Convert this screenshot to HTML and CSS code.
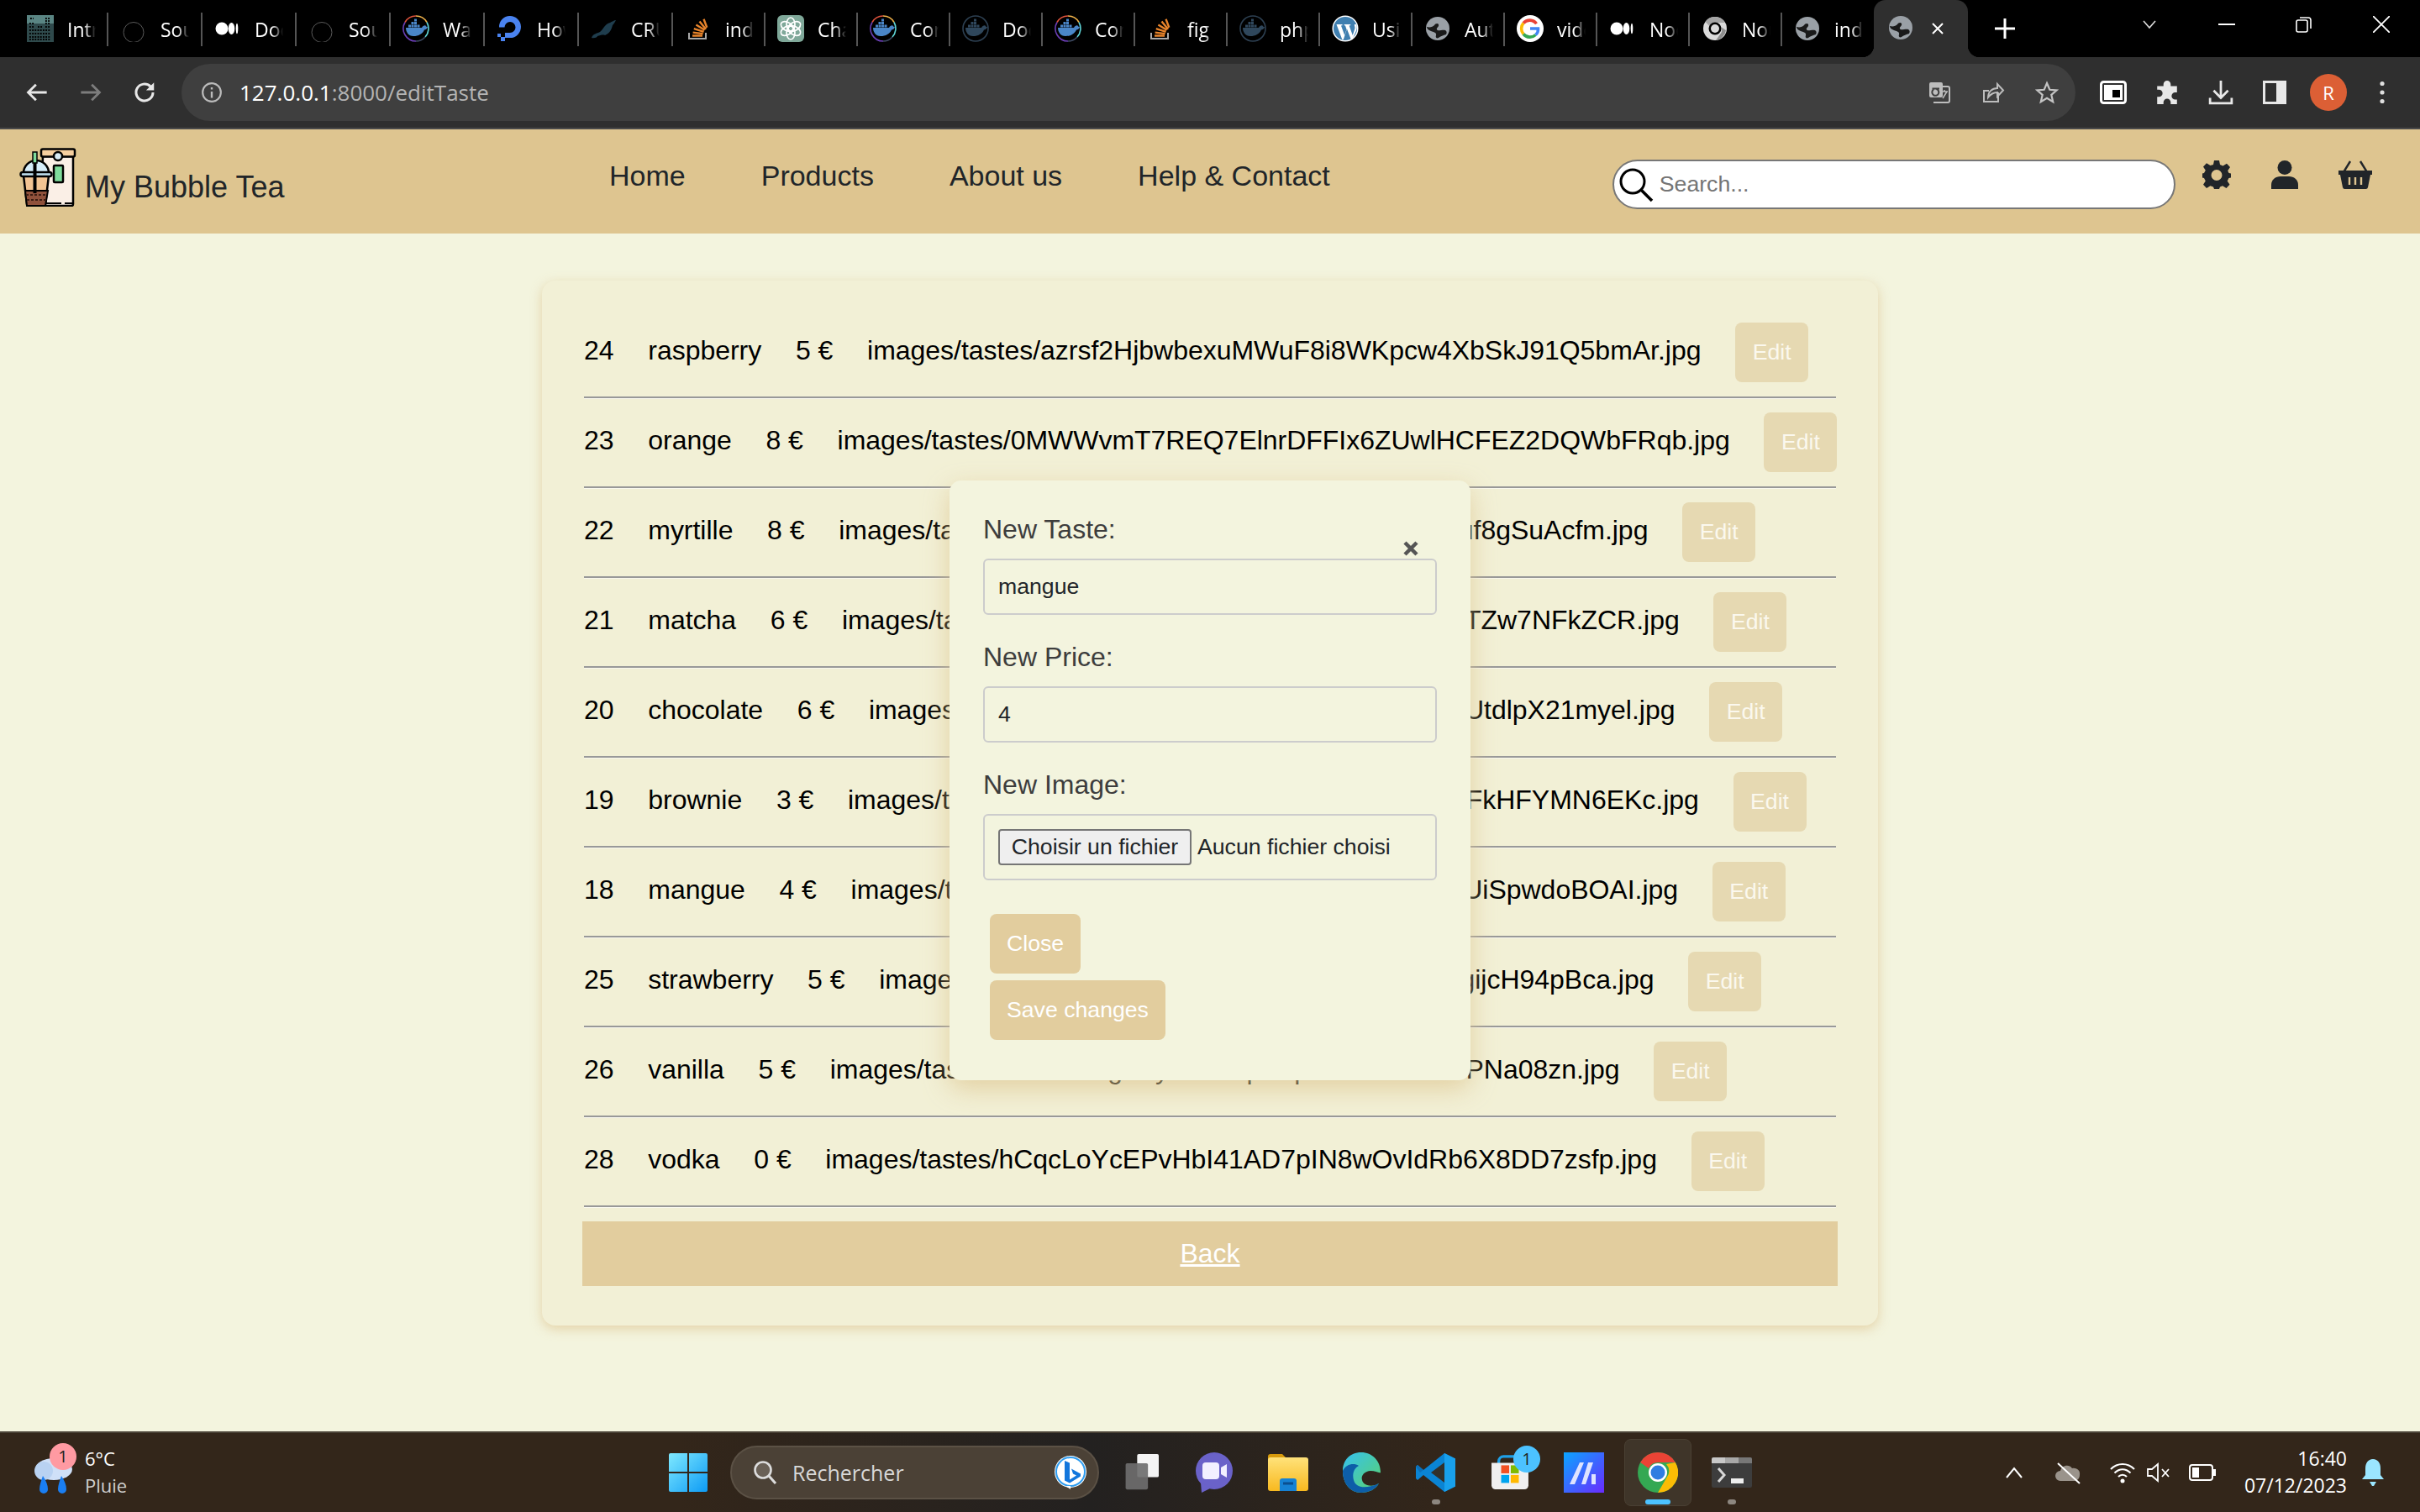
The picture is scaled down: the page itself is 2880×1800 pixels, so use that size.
FILE: index.html
```html
<!DOCTYPE html>
<html lang="en">
<head>
    <meta charset="UTF-8">
    <title>My Bubble Tea</title>
    <link rel="stylesheet" href="styles.css">
</head>
<body>

<!-- icons used more than once -->
<svg class="sprite" width="0" height="0">
    <defs>
        <linearGradient id="winBlue" x1="0" y1="0" x2="1" y2="1"><stop offset="0" stop-color="#7fe9ff"/><stop offset="1" stop-color="#0d9bf5"/></linearGradient>
        <linearGradient id="edgeG" x1="0" y1="0" x2="1" y2="1"><stop offset="0" stop-color="#35c1f1"/><stop offset="1" stop-color="#5bd36a"/></linearGradient>
        <linearGradient id="appBlue" x1="0" y1="0" x2="1" y2="1"><stop offset="0" stop-color="#0aa5ff"/><stop offset="1" stop-color="#6a2bff"/></linearGradient>
        <linearGradient id="folderG" x1="0" y1="0" x2="0" y2="1"><stop offset="0" stop-color="#ffe27a"/><stop offset="1" stop-color="#f8b91f"/></linearGradient>
    </defs>
    <symbol id="ring" viewBox="0 0 32 32"><circle cx="16" cy="20.500" r="12" fill="none" stroke="#5a5a5a" stroke-width="1"/></symbol>
    <symbol id="medium" viewBox="0 0 32 32"><circle cx="9" cy="16" r="7.500" fill="#fff"/><ellipse cx="20.500" cy="16" rx="3.800" ry="7" fill="#fff"/><ellipse cx="27" cy="16" rx="1.300" ry="6.300" fill="#fff"/></symbol>
    <symbol id="whale" viewBox="0 0 32 32"><path d="M4 15h19c1-2 3-3 4.500-2.500 .5 1 1.500 1.500 2.500 1.700-1 2.300-2.500 3-4 3.200C24 22 19 25 13 25 7 25 4 20 4 15z" fill="currentColor"/><path d="M7 11.500h3v3H7zM10.500 11.500h3v3h-3zM14 11.500h3v3h-3zM17.500 11.500h3v3h-3zM10.500 8h3v3h-3zM14 8h3v3h-3zM14 4.500h3v3h-3z" fill="currentColor"/></symbol>
    <symbol id="docker" viewBox="0 0 32 32">
        <path d="M16 1a15 15 0 0 0-13 7.500" fill="none" stroke="#e0533d" stroke-width="1.600"/>
        <path d="M16 1a15 15 0 0 1 13 7.500" fill="none" stroke="#f0b24a" stroke-width="1.600"/>
        <path d="M29 8.500A15 15 0 0 1 27 26" fill="none" stroke="#5fd4d6" stroke-width="1.600"/>
        <path d="M27 26a15 15 0 0 1-11 5" fill="none" stroke="#3e4a63" stroke-width="1.600"/>
        <path d="M16 31A15 15 0 0 1 3 8.500" fill="none" stroke="#6a3fb5" stroke-width="1.600"/>
        <use href="#whale" style="color:#4a86c8"/>
    </symbol>
    <symbol id="dockerDim" viewBox="0 0 32 32"><circle cx="16" cy="16" r="15" fill="none" stroke="#2d4052" stroke-width="1.600"/><use href="#whale" style="color:#2f475c"/></symbol>
    <symbol id="stack" viewBox="0 0 32 32"><path d="M5 21v7h20v-7" fill="none" stroke="#a9a9a9" stroke-width="2"/><path d="M9 24.500h12M9.600 20.600l12 1.500M10.800 16.200l11.800 3.600M13.400 11.500l10.200 6.300M17.500 7.400l7.600 9.400M22.500 4.800l3.800 10" stroke="#e8842b" stroke-width="2.400" fill="none"/></symbol>
    <symbol id="globe" viewBox="0 0 32 32"><circle cx="16" cy="16" r="14" fill="#9aa0a6"/><path d="M3 14c4 1 7 0 9-2 1-2 4-3 5-1 1 3-3 4-2 6 1 3 6 0 10 1 2 1 2 3 1 5-3 1-7 2-9 4-2 1-4 0-3-3 1-3-3-4-6-5-3-1-5-3-5-5z" fill="#1a1a1a"/></symbol>
    <symbol id="chromeGrey" viewBox="0 0 32 32"><circle cx="16" cy="16" r="14" fill="#dadada"/><path d="M16 2a14 14 0 0 1 12.100 7H16a7 7 0 0 0-6.500 4L4.500 8A14 14 0 0 1 16 2z" fill="#a4a4a4"/><path d="M23 14l6 4a14 14 0 0 1-12 12l5-7a7 7 0 0 0 1-9z" fill="#8e8e8e"/><circle cx="16" cy="16" r="7.500" fill="#000"/><circle cx="16" cy="16" r="5" fill="#dadada"/></symbol>
</svg>

<!-- browser tab strip -->
<div class="tabstrip">
    <div class="tab">
        <svg class="tab-icon" viewBox="0 0 32 32"><rect width="32" height="32" fill="#2f4a4c"/><rect width="32" height="10" fill="#5a8583"/><path d="M3 10h5M22 4h5M22 10h5M3 14h5M13 14h5M22 14h5M3 18h25M3 22h25M3 26h25M3 29h25" stroke="#000" stroke-width="1.800" stroke-dasharray="1.800 1.400"/><path d="M4 4h4M22 7h5" stroke="#000" stroke-width="2" stroke-dasharray="1.800 1.400"/></svg>
        <span class="tab-title">Intro</span>
    </div>
    <div class="tab wide"><svg class="tab-icon"><use href="#ring"/></svg><span class="tab-title">Source</span></div>
    <div class="tab wide"><svg class="tab-icon"><use href="#medium"/></svg><span class="tab-title">Docker</span></div>
    <div class="tab wide"><svg class="tab-icon"><use href="#ring"/></svg><span class="tab-title">Source</span></div>
    <div class="tab wide"><svg class="tab-icon"><use href="#docker"/></svg><span class="tab-title">Wait</span></div>
    <div class="tab wide">
        <svg class="tab-icon" viewBox="0 0 32 32"><path d="M16 27v-6a6.500 6.500 0 1 0-6.500-6.500H3A13 13 0 1 1 16 27z" fill="#4a83f0"/><path d="M10 21h6v6h-6zM5 26h5v5H5zM1 22h4v4H1z" fill="#4a83f0"/></svg>
        <span class="tab-title">How</span>
    </div>
    <div class="tab wide">
        <svg class="tab-icon" viewBox="0 0 32 32"><path d="M1 27c2-5 6-5 10-7 4-3 6-10 12-11 2-1 5-3 7-3-1 2-3 5-4 6-1 5-4 10-9 12-2-1-6 0-9 1 0 1-3 3-7 2z" fill="#1f3d4d"/></svg>
        <span class="tab-title">CRUD</span>
    </div>
    <div class="tab"><svg class="tab-icon"><use href="#stack"/></svg><span class="tab-title">index</span></div>
    <div class="tab">
        <svg class="tab-icon" viewBox="0 0 32 32"><rect width="32" height="32" rx="6" fill="#7fa899"/><g fill="none" stroke="#fff" stroke-width="1.700"><ellipse cx="16" cy="11" rx="5" ry="8"/><ellipse cx="16" cy="11" rx="5" ry="8" transform="rotate(60 16 16)"/><ellipse cx="16" cy="11" rx="5" ry="8" transform="rotate(120 16 16)"/><ellipse cx="16" cy="11" rx="5" ry="8" transform="rotate(180 16 16)"/><ellipse cx="16" cy="11" rx="5" ry="8" transform="rotate(240 16 16)"/><ellipse cx="16" cy="11" rx="5" ry="8" transform="rotate(300 16 16)"/></g></svg>
        <span class="tab-title">ChatGPT</span>
    </div>
    <div class="tab"><svg class="tab-icon"><use href="#docker"/></svg><span class="tab-title">Container</span></div>
    <div class="tab"><svg class="tab-icon"><use href="#dockerDim"/></svg><span class="tab-title">Docker</span></div>
    <div class="tab"><svg class="tab-icon"><use href="#docker"/></svg><span class="tab-title">Container</span></div>
    <div class="tab"><svg class="tab-icon"><use href="#stack"/></svg><span class="tab-title">fig</span></div>
    <div class="tab"><svg class="tab-icon"><use href="#dockerDim"/></svg><span class="tab-title">php</span></div>
    <div class="tab">
        <svg class="tab-icon" viewBox="0 0 32 32"><circle cx="16" cy="16" r="15.500" fill="#fff"/><circle cx="16" cy="16" r="14" fill="#3f7fb0"/><path d="M5.500 11h7v1.200l-1.500.2 4.200 11.600 2.300-7-1.500-4.600-1.300-.2V11h7.500v1.200l-1.600.2 4.200 11.600 2.600-8c.5-2-.8-3.200-.5-5h2.300c1 3 .5 5.500-.3 7.800L24.300 29h-1.500l-4.800-12.500L13.800 29h-1.500z" fill="#fff"/></svg>
        <span class="tab-title">Using</span>
    </div>
    <div class="tab"><svg class="tab-icon"><use href="#globe"/></svg><span class="tab-title">Auth</span></div>
    <div class="tab">
        <svg class="tab-icon" viewBox="0 0 32 32"><circle cx="16" cy="16" r="16" fill="#fff"/><path d="M23.500 10.200A10 10 0 0 0 8 9.500" fill="none" stroke="#ea4335" stroke-width="3.600"/><path d="M8 9.500a10 10 0 0 0 0 13" fill="none" stroke="#fbbc05" stroke-width="3.600"/><path d="M8 22.500a10 10 0 0 0 14.500 1" fill="none" stroke="#34a853" stroke-width="3.600"/><path d="M22.500 23.500A9 9 0 0 0 25.500 16H16" fill="none" stroke="#4285f4" stroke-width="3.600"/></svg>
        <span class="tab-title">video</span>
    </div>
    <div class="tab"><svg class="tab-icon"><use href="#medium"/></svg><span class="tab-title">Node</span></div>
    <div class="tab"><svg class="tab-icon"><use href="#chromeGrey"/></svg><span class="tab-title">Nouvel</span></div>
    <div class="tab last"><svg class="tab-icon"><use href="#globe"/></svg><span class="tab-title">index</span></div>
    <div class="tab-active">
        <svg class="tab-icon"><use href="#globe"/></svg>
        <svg class="tab-close" viewBox="0 0 16 16"><path d="M2 2l12 12M14 2L2 14" stroke="#fff" stroke-width="2"/></svg>
    </div>
    <svg class="new-tab" viewBox="0 0 24 24"><path d="M12 0v24M0 12h24" stroke="#fff" stroke-width="3"/></svg>
    <div class="window-btns">
        <div class="window-btn"><svg viewBox="0 0 16 16" width="16" height="16"><path d="M1 4l7 8 7-8" fill="none" stroke="#ddd" stroke-width="1.600"/></svg></div>
        <div class="window-btn"><svg viewBox="0 0 20 20" width="20" height="20"><path d="M0 10h20" stroke="#fff" stroke-width="2"/></svg></div>
        <div class="window-btn"><svg viewBox="0 0 20 20" width="20" height="20"><rect x="1" y="5" width="13" height="14" rx="2" fill="none" stroke="#fff" stroke-width="1.600"/><path d="M5 2h10a3 3 0 0 1 3 3v10" fill="none" stroke="#fff" stroke-width="1.600"/></svg></div>
        <div class="window-btn"><svg viewBox="0 0 20 20" width="20" height="20"><path d="M0 0l20 20M20 0L0 20" stroke="#fff" stroke-width="1.800"/></svg></div>
    </div>
</div>

<!-- browser toolbar -->
<div class="toolbar">
    <div class="tool-btn"><svg viewBox="0 0 24 24" width="28" height="28"><path d="M22 12H3M11 4l-8 8 8 8" fill="none" stroke="#e8e8e8" stroke-width="2.400"/></svg></div>
    <div class="tool-btn"><svg viewBox="0 0 24 24" width="28" height="28"><path d="M2 12h19M13 4l8 8-8 8" fill="none" stroke="#7d7d7d" stroke-width="2.400"/></svg></div>
    <div class="tool-btn"><svg viewBox="0 0 24 24" width="30" height="30"><path d="M20 12a8 8 0 1 1-2.400-5.700L20 8.700" fill="none" stroke="#e8e8e8" stroke-width="2.400"/><path d="M21 2.500v7.500h-7.500z" fill="#e8e8e8"/></svg></div>
    <div class="omnibox">
        <svg class="omni-info" viewBox="0 0 24 24" width="26" height="26"><circle cx="12" cy="12" r="10" fill="none" stroke="#bbb" stroke-width="2"/><path d="M12 11v7M12 6.500v2.200" stroke="#bbb" stroke-width="2.200"/></svg>
        <div class="url"><span class="url-host">127.0.0.1</span>:8000/editTaste</div>
        <div class="omni-actions">
            <div class="tool-btn"><svg viewBox="0 0 28 28" width="28" height="28"><rect x="2" y="2" width="16" height="18" rx="2" fill="#bdbdbd"/><path d="M7 26h17a2 2 0 0 0 2-2V9a2 2 0 0 0-2-2h-6" fill="none" stroke="#bdbdbd" stroke-width="2"/><path d="M14 9.500H6.500V11a4 4 0 1 0 4-1" fill="none" stroke="#3f3f3f" stroke-width="2"/><path d="M17 13h7M20 11v2M18 21l5-8" stroke="#bdbdbd" stroke-width="1.500" fill="none"/></svg></div>
            <div class="tool-btn"><svg viewBox="0 0 28 28" width="28" height="28"><path d="M20 14v11H3V12h6" fill="none" stroke="#bdbdbd" stroke-width="2"/><path d="M8 20c0-7 5-11 11-11V4l7 7.500-7 7.500v-5c-5 0-8 2-11 6z" fill="none" stroke="#bdbdbd" stroke-width="2"/></svg></div>
            <div class="tool-btn"><svg viewBox="0 0 28 28" width="28" height="28"><path d="M14 3l3.300 7.800 8.200.7-6.200 5.500 1.900 8.200L14 20.800 6.800 25.200l1.900-8.200-6.200-5.500 8.200-.7z" fill="none" stroke="#c4c4c4" stroke-width="2.200"/></svg></div>
        </div>
    </div>
    <div class="toolbar-actions">
        <div class="tool-btn"><svg viewBox="0 0 32 28" width="32" height="28"><rect x="1.500" y="1.500" width="29" height="25" rx="3" fill="none" stroke="#fff" stroke-width="3"/><rect x="5" y="5" width="22" height="18" fill="#fff"/><rect x="15" y="11" width="9" height="9" fill="#000"/></svg></div>
        <div class="tool-btn"><svg viewBox="0 0 28 28" width="30" height="30"><path d="M10 5a4 4 0 0 1 8 0v2h7v7h-2a4 4 0 0 0 0 8h2v5H18v-2a4 4 0 0 0-8 0v2H3v-8h2a4 4 0 0 0 0-8H3V7h7z" fill="#e8e8e8"/></svg></div>
        <div class="tool-btn"><svg viewBox="0 0 28 28" width="30" height="32"><path d="M14 1v18M6 12l8 8 8-8" fill="none" stroke="#e8e8e8" stroke-width="2.600"/><path d="M2 20v6h24v-6" fill="none" stroke="#e8e8e8" stroke-width="2.600"/></svg></div>
        <div class="tool-btn"><svg viewBox="0 0 28 28" width="28" height="28"><rect x="1.500" y="1.500" width="25" height="25" fill="none" stroke="#e8e8e8" stroke-width="3"/><rect x="16" y="2" width="10" height="24" fill="#e8e8e8"/></svg></div>
        <div class="tool-btn"><div class="avatar">R</div></div>
        <div class="tool-btn"><svg viewBox="0 0 6 28" width="6" height="28"><circle cx="3" cy="3.500" r="2.600" fill="#e0e0e0"/><circle cx="3" cy="14" r="2.600" fill="#e0e0e0"/><circle cx="3" cy="24.500" r="2.600" fill="#e0e0e0"/></svg></div>
    </div>
</div>

<!-- site header -->
<header class="site-header">
    <div class="brand">
        <svg class="brand-logo" viewBox="0 0 68 70">
            <path d="M28 10h36v57a2 2 0 0 1-2 2H26z" fill="#faefe6" stroke="#000" stroke-width="2.500"/>
            <path d="M28 66h36" stroke="#000" stroke-width="2" stroke-dasharray="22 4 9 9" fill="none"/>
            <rect x="26" y="1.500" width="40" height="9" rx="2" fill="#f6cf9f" stroke="#000" stroke-width="2.500"/>
            <circle cx="46" cy="10" r="5" fill="#d8ecf6" stroke="#000" stroke-width="2.500"/>
            <rect x="41" y="21" width="11" height="20" rx="1" fill="#7fdc9c" stroke="#000" stroke-width="2.500"/>
            <path d="M5 33l4 34a2 2 0 0 0 2 2h18a2 2 0 0 0 2-2l4-34z" fill="#f2c493" stroke="#000" stroke-width="2.500"/>
            <path d="M7 51h27l-3 18H9z" fill="#8f513b" stroke="#000" stroke-width="2"/>
            <path d="M8 56h25M9 62h23" stroke="#3d1e14" stroke-width="2" stroke-dasharray="3 2"/>
            <path d="M5 30a15 15 0 0 1 30 0z" fill="#d6eefa" stroke="#000" stroke-width="2.500"/>
            <rect x="1.500" y="29" width="37" height="5" rx="2.500" fill="#c3e3f3" stroke="#000" stroke-width="2.500"/>
            <rect x="16" y="5" width="5" height="13" fill="#7fdc9c" stroke="#000" stroke-width="1.500"/>
            <path d="M18.500 18v36" stroke="#000" stroke-width="4"/>
        </svg>
        <span class="brand-name">My Bubble Tea</span>
    </div>
    <nav class="site-nav">
        <a href="#">Home</a>
        <a href="#">Products</a>
        <a href="#">About us</a>
        <a href="#">Help &amp; Contact</a>
    </nav>
    <div class="search-box">
        <svg viewBox="0 0 42 42" width="42" height="42"><circle cx="17" cy="17" r="14" fill="none" stroke="#000" stroke-width="3"/><path d="M27 27l13 13" stroke="#000" stroke-width="3.500"/></svg>
        <input type="text" placeholder="Search...">
    </div>
    <div class="header-icons">
        <svg class="icon-gear" viewBox="0 0 34 34" width="34" height="34"><path fill-rule="evenodd" d="M14 0h6l1 5 3.500 1.500 4.500-2.800 4 4.300-2.800 4.300L31.500 15l2.500.5v5l-2.500.5-1.800 3.500 2.800 4.300-4 4.300-4.500-2.800L21 31.500 20 34h-6l-1-2.500-3.500-1.300L5 33l-4-4.300 2.800-4.300L2 21l-2-.5v-5l2-.5 1.800-3.200L1 7.500l4-4.300 4.500 2.800L13 5zM17 11a6.500 6.500 0 1 0 0 13 6.500 6.500 0 0 0 0-13z" fill="#212529"/></svg>
        <svg class="icon-user" viewBox="0 0 32 34" width="32" height="34"><circle cx="16" cy="8.500" r="8.500" fill="#212529"/><path d="M0 34v-5c0-6 5-10 11-10h10c6 0 11 4 11 10v5z" fill="#212529"/></svg>
        <svg class="icon-basket" viewBox="0 0 40 34" width="40" height="34"><path d="M6 14L14 1M34 14L26 1" stroke="#212529" stroke-width="2.400"/><path d="M0 12h40v5h-2l-3 15a2.500 2.500 0 0 1-2.500 2h-25A2.500 2.500 0 0 1 5 32L2 17H0z" fill="#212529"/><path d="M13 20v9M20 20v9M27 20v9" stroke="#dec590" stroke-width="2.400"/></svg>
    </div>
</header>

<!-- taste list -->
<main class="card">
    <div class="taste-row"><span>24</span><span>raspberry</span><span>5 €</span><span>images/tastes/azrsf2HjbwbexuMWuF8i8WKpcw4XbSkJ91Q5bmAr.jpg</span><button class="btn-edit">Edit</button></div>
    <div class="taste-row"><span>23</span><span>orange</span><span>8 €</span><span>images/tastes/0MWWvmT7REQ7ElnrDFFIx6ZUwlHCFEZ2DQWbFRqb.jpg</span><button class="btn-edit">Edit</button></div>
    <div class="taste-row"><span>22</span><span>myrtille</span><span>8 €</span><span>images/tastes/h4nd0a7eub3k2od9ba6ne1uh8dob5auf8gSuAcfm.jpg</span><button class="btn-edit">Edit</button></div>
    <div class="taste-row"><span>21</span><span>matcha</span><span>6 €</span><span>images/tastes/a7nEb2ud5oh8ke1dn4bu0ha6eo3nd9TZw7NFkZCR.jpg</span><button class="btn-edit">Edit</button></div>
    <div class="taste-row"><span>20</span><span>chocolate</span><span>6 €</span><span>images/tastes/E0nb6aEu2hk7od3ne9ba1du5oh4nUtdlpX21myel.jpg</span><button class="btn-edit">Edit</button></div>
    <div class="taste-row"><span>19</span><span>brownie</span><span>3 €</span><span>images/tastes/R5duE3nbR7ao1he8nu2db4oa6hn9eFkHFYMN6EKc.jpg</span><button class="btn-edit">Edit</button></div>
    <div class="taste-row"><span>18</span><span>mangue</span><span>4 €</span><span>images/tastes/n3Eau8db1oh5Ene7ub2da9ho4nu6eUiSpwdoBOAI.jpg</span><button class="btn-edit">Edit</button></div>
    <div class="taste-row"><span>25</span><span>strawberry</span><span>5 €</span><span>images/tastes/t4nat7buid2oh8kne3du5ab1oh6negijcH94pBca.jpg</span><button class="btn-edit">Edit</button></div>
    <div class="taste-row"><span>26</span><span>vanilla</span><span>5 €</span><span>images/tastes/d3ou8bngkRyaE0b5pRkplt3kDfi7RoiscPNa08zn.jpg</span><button class="btn-edit">Edit</button></div>
    <div class="taste-row"><span>28</span><span>vodka</span><span>0 €</span><span>images/tastes/hCqcLoYcEPvHbI41AD7pIN8wOvIdRb6X8DD7zsfp.jpg</span><button class="btn-edit">Edit</button></div>
    <div class="back-bar"><a href="#">Back</a></div>
</main>

<!-- edit modal -->
<div class="modal">
    <svg class="modal-x" viewBox="0 0 20 20" width="20" height="20"><path d="M3 3l14 14M17 3L3 17" stroke="#555" stroke-width="4.500"/></svg>
    <label class="modal-label">New Taste:</label>
    <input class="modal-input" type="text" value="mangue">
    <label class="modal-label">New Price:</label>
    <input class="modal-input" type="text" value="4">
    <label class="modal-label">New Image:</label>
    <div class="file-box"><button class="file-btn">Choisir un fichier</button><span class="file-name">Aucun fichier choisi</span></div>
    <div class="modal-actions">
        <button class="btn-modal">Close</button>
        <button class="btn-modal">Save changes</button>
    </div>
</div>

<!-- windows taskbar -->
<footer class="taskbar">
    <div class="weather">
        <svg class="weather-icon" viewBox="0 0 50 56" width="50" height="56"><circle cx="33" cy="14" r="11" fill="#9cc4f0"/><ellipse cx="27" cy="24" rx="22" ry="13" fill="#cfe0f8"/><circle cx="15" cy="26" r="11" fill="#b9d2f2"/><path d="M14 32c4 6 6 11 6 16a5 5 0 0 1-10 0c0-5 2-10 4-16zM36 32c4 6 6 11 6 16a5 5 0 0 1-10 0c0-5 2-10 4-16z" fill="#1a7ef2"/></svg>
        <div class="badge badge-pink">1</div>
        <div class="weather-text"><div>6°C</div><div class="weather-sub">Pluie</div></div>
    </div>
    <svg class="win-logo" viewBox="0 0 46 46" width="46" height="46"><path d="M0 2a2 2 0 0 1 2-2h20v22H0zM24 0h20a2 2 0 0 1 2 2v20H24zM0 24h22v22H2a2 2 0 0 1-2-2zM24 24h22v20a2 2 0 0 1-2 2H24z" fill="url(#winBlue)"/></svg>
    <div class="task-search">
        <svg viewBox="0 0 30 30" width="30" height="30"><circle cx="13" cy="12" r="9.500" fill="#6a6157" stroke="#ddd" stroke-width="2.600"/><path d="M20 19l8 9" stroke="#ddd" stroke-width="3"/></svg>
        <span>Rechercher</span>
        <svg class="bing" viewBox="0 0 40 42" width="40" height="42"><circle cx="20" cy="20" r="19" fill="#fff"/><circle cx="20" cy="20" r="17" fill="none" stroke="#2f9df0" stroke-width="2"/><path d="M13 7l6 2.500v20l8-5-4-2-2-6 11 6v3l-13 8-6-3z" fill="#1276dc"/><path d="M14 37l6 4v-4z" fill="#fff"/></svg>
    </div>
    <div class="task-apps">
        <div class="task-app"><svg viewBox="0 0 48 48" width="48" height="44"><rect x="20" y="0" width="28" height="30" rx="2" fill="#f4f4f4"/><rect x="5" y="12" width="29" height="34" rx="2" fill="#6e6e6e" opacity=".92"/></svg></div>
        <div class="task-app"><svg viewBox="0 0 48 48" width="48" height="48"><circle cx="24" cy="22" r="22" fill="#6a62c9"/><path d="M8 36l1 12 12-6z" fill="#6a62c9"/><rect x="10" y="12" width="20" height="20" rx="4" fill="#f2f0ff"/><path d="M32 18l7-4v16l-7-4z" fill="#f2f0ff"/></svg></div>
        <div class="task-app"><svg viewBox="0 0 48 44" width="48" height="44"><path d="M0 3a3 3 0 0 1 3-3h14l6 6h22a3 3 0 0 1 3 3v3H0z" fill="#d79a0c"/><rect y="4" width="48" height="40" rx="3" fill="url(#folderG)"/><path d="M14 32a3 3 0 0 1 3-3h14a3 3 0 0 1 3 3v12H14z" fill="#1682d4"/><path d="M18 35h12" stroke="#0b4f8f" stroke-width="3"/></svg></div>
        <div class="task-app"><svg viewBox="0 0 48 48" width="48" height="48"><path d="M46 24C46 10 36 0 23 0 9 0 1 10 1 22c0 14 8 26 22 26 9 0 17-4 21-11-6 4-18 4-20-4-2-6 4-11 10-11 6 0 10 3 12 2z" fill="url(#edgeG)"/><path d="M23 48C9 48 1 36 1 22 5 14 14 12 20 16c-6 3-8 10-6 17 2 8 12 12 30 4-4 7-12 11-21 11z" fill="#0d5ea8"/></svg></div>
        <div class="task-app"><svg viewBox="0 0 48 48" width="48" height="48"><path d="M34 1l13 6.500v33L34 47 9 27 2 33l-2-2V17l2-2 7 6z" fill="#0a84d4"/><path d="M34 12v24L18 24z" fill="#32302b"/><path d="M34 1l13 6.500v33L34 47z" fill="#18a0ec"/><path d="M0 17l2-2 7 6-4 3z" fill="#0b6fb8"/></svg></div>
        <div class="task-app">
            <svg viewBox="0 0 48 44" width="48" height="42"><path d="M10 12V8a6 6 0 0 1 6-6h16a6 6 0 0 1 6 6v4" fill="none" stroke="#1fa0e8" stroke-width="3.500"/><path d="M1 10h46v28a5 5 0 0 1-5 5H6a5 5 0 0 1-5-5z" fill="#f0f0f0"/><rect x="13" y="13" width="10" height="10" fill="#f25022"/><rect x="25" y="13" width="10" height="10" fill="#7fba00"/><rect x="13" y="25" width="10" height="10" fill="#00a4ef"/><rect x="25" y="25" width="10" height="10" fill="#ffb900"/></svg>
            <div class="badge badge-blue">1</div>
        </div>
        <div class="task-app"><svg viewBox="0 0 48 48" width="48" height="48"><rect width="48" height="48" fill="url(#appBlue)"/><path d="M7 38L19 12h5L13 38zM21 38l8-26h6l-9 26z" fill="#dfe3ff"/><path d="M33 26h5v12h-5z" fill="#dfe3ff"/></svg></div>
        <div class="task-app task-app-active"><svg viewBox="0 0 48 48" width="48" height="48"><circle cx="24" cy="24" r="24" fill="#34a853"/><path d="M24 0a24 24 0 0 1 20.800 12H24a12 12 0 0 0-11 7L3.200 12A24 24 0 0 1 24 0z" fill="#ea4335"/><path d="M44.800 12A24 24 0 0 1 24 48l10.500-18A12 12 0 0 0 34 14z" fill="#fbbc05"/><circle cx="24" cy="24" r="11" fill="#fff"/><circle cx="24" cy="24" r="8.500" fill="#2f7de1"/></svg></div>
        <div class="task-app"><svg viewBox="0 0 48 36" width="48" height="36"><rect width="48" height="36" rx="2" fill="#3d3d3d"/><path d="M0 2a2 2 0 0 1 2-2h14v7H0z" fill="#c8c8c8"/><rect x="16" width="16" height="7" fill="#a8a8a8"/><path d="M32 0h14a2 2 0 0 1 2 2v5H32z" fill="#777"/><path d="M8 13l7 8-7 8" fill="none" stroke="#d8d8d8" stroke-width="3"/><rect x="23" y="25" width="15" height="6" fill="#eee"/></svg></div>
    </div>
    <div class="tray">
        <svg viewBox="0 0 24 16" width="24" height="16"><path d="M3 14l9-11 9 11" fill="none" stroke="#fff" stroke-width="2"/></svg>
        <svg class="tray-cloud" viewBox="0 0 32 32" width="32" height="32"><path d="M6 26a6 6 0 0 1 0-12c1-6 10-9 14-3 6-1 10 3 9 8 0 4-3 7-6 7z" fill="#9a938b"/><path d="M3 5l26 24" stroke="#fff" stroke-width="2"/></svg>
        <svg class="tray-wifi" viewBox="0 0 30 26" width="30" height="26"><path d="M1 9c8-8 20-8 28 0M5.500 13.500c6-5.500 13-5.500 19 0M10 18c3-3 7-3 10 0" fill="none" stroke="#fff" stroke-width="2.200"/><circle cx="15" cy="23" r="2.500" fill="#fff"/></svg>
        <svg class="tray-sound" viewBox="0 0 30 26" width="30" height="26"><path d="M2 9h5l7-6v20l-7-6H2z" fill="none" stroke="#fff" stroke-width="1.800"/><path d="M19 9l8 9M27 9l-8 9" stroke="#fff" stroke-width="1.800"/></svg>
        <svg class="tray-battery" viewBox="0 0 32 20" width="32" height="20"><rect x="1" y="1" width="27" height="18" rx="3" fill="none" stroke="#fff" stroke-width="2"/><rect x="4" y="4" width="8" height="12" fill="#fff"/><rect x="29" y="6" width="3" height="8" fill="#fff"/></svg>
        <div class="clock"><div>16:40</div><div>07/12/2023</div></div>
        <svg class="tray-bell" viewBox="0 0 28 32" width="28" height="32"><path d="M14 0c-6 0-9 5-9 11v8l-4 5h26l-4-5v-8c0-6-3-11-9-11z" fill="#9be6ff"/><path d="M10 27h8l-3 5h-2z" fill="#9be6ff"/></svg>
    </div>
</footer>

</body>
</html>
```

FILE: styles.css
```css
body {
    margin: 0;
    width: 2880px;
    height: 1800px;
    overflow: hidden;
    position: relative;
    background-color: #f3f4de;
    font-family: "Liberation Sans", Arial, sans-serif;
    color: #000000;
}
.sprite {
    position: absolute;
}

/* tab strip */
.tabstrip {
    display: flex;
    align-items: flex-start;
    height: 68px;
    padding-left: 18px;
    background-color: #000000;
    font-family: "Open Sans", sans-serif;
    color: #ffffff;
}
.tab {
    display: flex;
    align-items: center;
    flex: none;
    box-sizing: border-box;
    width: 110px;
    height: 40px;
    margin-top: 15px;
    padding-left: 14px;
    border-right: 2px solid #555555;
}
.tab.wide {
    width: 112px;
}
.tab:first-child {
    width: 111px;
}
.tab.last {
    width: 109px;
    border-right: none;
}
.tab-icon {
    flex: none;
    width: 32px;
    height: 32px;
    margin-top: -2px;
}
.tab-title {
    width: 34px;
    margin-left: 16px;
    overflow: hidden;
    white-space: nowrap;
    font-size: 23px;
    -webkit-mask-image: linear-gradient(to right, #000 60%, transparent 100%);
    mask-image: linear-gradient(to right, #000 60%, transparent 100%);
}
.tab-active {
    position: relative;
    display: flex;
    align-items: center;
    flex: none;
    box-sizing: border-box;
    width: 112px;
    height: 68px;
    padding-left: 16px;
    border-radius: 14px 14px 0 0;
    background-color: #2f2f2f;
}
.tab-active::before,
.tab-active::after {
    content: "";
    position: absolute;
    bottom: 0;
    width: 14px;
    height: 14px;
}
.tab-active::before {
    left: -14px;
    background: radial-gradient(circle at 0 0, #000000 14px, #2f2f2f 14.500px);
}
.tab-active::after {
    right: -14px;
    background: radial-gradient(circle at 100% 0, #000000 14px, #2f2f2f 14.500px);
}
.tab-close {
    width: 16px;
    height: 16px;
    margin-left: 20px;
}
.new-tab {
    flex: none;
    width: 24px;
    height: 24px;
    margin: 22px 0 0 32px;
}
.window-btns {
    display: flex;
    margin-left: auto;
}
.window-btn {
    display: flex;
    align-items: center;
    justify-content: center;
    width: 92px;
    height: 58px;
}

/* toolbar */
.toolbar {
    display: flex;
    align-items: center;
    box-sizing: border-box;
    height: 86px;
    padding-left: 12px;
    border-bottom: 2px solid #4a4a4a;
    background-color: #2f2f2f;
}
.tool-btn {
    display: flex;
    align-items: center;
    justify-content: center;
    flex: none;
    width: 64px;
    height: 64px;
}
.omnibox {
    display: flex;
    align-items: center;
    box-sizing: border-box;
    width: 2254px;
    height: 68px;
    margin-left: 12px;
    padding: 0 2px 0 23px;
    border-radius: 34px;
    background-color: #3f3f3f;
}
.omni-info {
    flex: none;
}
.url {
    margin-left: 20px;
    font-family: "Open Sans", sans-serif;
    font-size: 26px;
    color: #b4b4b4;
}
.url-host {
    color: #ffffff;
}
.omni-actions {
    display: flex;
    margin-left: auto;
}
.toolbar-actions {
    display: flex;
    margin-left: 13px;
}
.avatar {
    width: 44px;
    height: 44px;
    border-radius: 50%;
    background-color: #dc5f35;
    font-family: "Open Sans", sans-serif;
    font-size: 22px;
    line-height: 44px;
    text-align: center;
    color: #ffffff;
}

/* site header */
.site-header {
    display: flex;
    align-items: flex-start;
    box-sizing: border-box;
    height: 124px;
    padding-left: 23px;
    background-color: #dec590;
    color: #212529;
}
.brand {
    display: flex;
    align-items: flex-end;
    flex: none;
    width: 702px;
    margin-top: 22px;
}
.brand-logo {
    width: 68px;
    height: 70px;
}
.brand-name {
    margin: 0 0 2px 10px;
    font-size: 36px;
}
.site-nav {
    display: flex;
    gap: 90px;
    margin-top: 36px;
}
.site-nav a {
    font-size: 34px;
    color: #212529;
    text-decoration: none;
}
.search-box {
    display: flex;
    align-items: center;
    flex: none;
    box-sizing: border-box;
    width: 670px;
    height: 59px;
    margin: 36px 0 0 336px;
    padding-left: 5px;
    border: 2px solid #777777;
    border-radius: 30px;
    background-color: #ffffff;
}
.search-box input {
    width: 560px;
    margin-left: 5px;
    border: none;
    outline: none;
    font-family: "Liberation Sans", Arial, sans-serif;
    font-size: 26.670px;
}
.header-icons {
    display: flex;
    align-items: center;
    margin: 37px 0 0 32px;
}
.icon-user {
    margin-left: 48px;
}
.icon-basket {
    margin-left: 48px;
}

/* taste card */
.card {
    box-sizing: border-box;
    width: 1590px;
    margin: 56px auto 0;
    padding: 34px 50px 47px;
    border-radius: 16px;
    background-color: #f2f0d6;
    box-shadow: 0 4px 14px rgba(222, 197, 144, 0.7);
}
.taste-row {
    display: flex;
    align-items: center;
    gap: 40.700px;
    padding: 16px 0 17px;
    border-bottom: 2px solid #999999;
    box-shadow: 0 1px 0 #f9f8ee;
    margin-bottom: 1px;
    font-size: 32px;
    letter-spacing: -0.020px;
    white-space: nowrap;
}
.taste-row span {
    margin-bottom: 4px;
}
.btn-edit {
    flex: none;
    width: 87px;
    height: 71px;
    border: none;
    border-radius: 8px;
    background-color: #e6d9b2;
    font-family: "Liberation Sans", Arial, sans-serif;
    font-size: 26.670px;
    color: #fbf8ee;
}
.back-bar {
    height: 77px;
    margin: 17px -2px 0;
    background-color: #e2cd9e;
    font-size: 32px;
    line-height: 77px;
    text-align: center;
}
.back-bar a {
    color: #ffffff;
}

/* modal */
.modal {
    position: absolute;
    top: 572px;
    left: 1130px;
    box-sizing: border-box;
    display: flex;
    flex-direction: column;
    width: 620px;
    height: 714px;
    padding: 40px 40px 0 40px;
    border-radius: 14px;
    background-color: #f3f4de;
    box-shadow: 0 10px 30px rgba(222, 197, 144, 0.75);
}
.modal-x {
    position: absolute;
    top: 71px;
    right: 61px;
}
.modal-label {
    height: 35px;
    margin-bottom: 18px;
    font-size: 32px;
    color: #3d3d3d;
}
.modal-input {
    box-sizing: border-box;
    flex: none;
    width: 540px;
    height: 67px;
    margin-bottom: 32px;
    padding: 0 16px;
    border: 2px solid #cccccc;
    border-radius: 6px;
    background-color: #f3f4de;
    font-family: "Liberation Sans", Arial, sans-serif;
    font-size: 26.670px;
    color: #212529;
}
.file-box {
    display: flex;
    align-items: center;
    box-sizing: border-box;
    flex: none;
    width: 540px;
    height: 79px;
    padding: 0 16px;
    border: 2px solid #cccccc;
    border-radius: 6px;
    font-size: 26.670px;
    color: #212529;
}
.file-btn {
    width: 230px;
    height: 43px;
    padding: 0;
    border: 2px solid #767676;
    border-radius: 4px;
    background-color: #efefef;
    font-family: "Liberation Sans", Arial, sans-serif;
    font-size: 26.670px;
    color: #212529;
}
.file-name {
    margin-left: 7px;
    white-space: nowrap;
}
.modal-actions {
    display: flex;
    flex-direction: column;
    align-items: flex-start;
    gap: 8px;
    margin: 40px 0 0 8px;
}
.btn-modal {
    height: 71px;
    padding: 0 20px;
    border: none;
    border-radius: 8px;
    background-color: #e2cd9e;
    font-family: "Liberation Sans", Arial, sans-serif;
    font-size: 26.670px;
    color: #ffffff;
}

/* taskbar */
.taskbar {
    position: absolute;
    left: 0;
    right: 0;
    bottom: 0;
    display: flex;
    align-items: center;
    box-sizing: border-box;
    height: 96px;
    padding-left: 37px;
    border-top: 2px solid #4a4236;
    background: linear-gradient(to right, #33261a 0%, #33261a 28%, #232120 45%, #33261a 60%, #33261a 100%);
    font-family: "Open Sans", sans-serif;
    color: #ffffff;
}
.weather {
    position: relative;
    display: flex;
    align-items: center;
    flex: none;
    width: 759px;
}
.weather-text {
    margin: -2px 0 0 14px;
    font-size: 22px;
    line-height: 32px;
}
.weather-sub {
    color: #cfcfcf;
}
.badge {
    position: absolute;
    width: 32px;
    height: 32px;
    border-radius: 50%;
    font-size: 20px;
    line-height: 32px;
    text-align: center;
    color: #222222;
}
.badge-pink {
    top: -4px;
    left: 22px;
    background-color: #ff9aa2;
}
.badge-blue {
    top: -8px;
    right: -12px;
    background-color: #4cc2ff;
}
.win-logo {
    flex: none;
}
.task-search {
    display: flex;
    align-items: center;
    flex: none;
    box-sizing: border-box;
    width: 439px;
    height: 64px;
    margin-left: 27px;
    padding: 0 12px 0 24px;
    border: 2px solid #5b5145;
    border-radius: 32px;
    background-color: #4b4136;
    font-size: 25px;
    color: #d8d8d8;
}
.task-search span {
    margin-left: 18px;
}
.bing {
    margin-left: auto;
}
.task-apps {
    display: flex;
    gap: 40px;
    margin-left: 25px;
}
.task-app {
    position: relative;
    display: flex;
    align-items: center;
    justify-content: center;
    width: 48px;
    height: 48px;
}
.task-app-active::before {
    content: "";
    position: absolute;
    inset: -16px -16px -16px;
    border-radius: 8px;
    background-color: #3f3529;
    border: 1px solid #4a4033;
}
.task-app-active svg {
    position: relative;
}
.task-app-active::after {
    content: "";
    position: absolute;
    left: 9px;
    bottom: -14px;
    width: 30px;
    height: 6px;
    border-radius: 3px;
    background-color: #4cc2ff;
}
.task-app:nth-child(5)::after,
.task-app:last-child::after {
    content: "";
    position: absolute;
    left: 19px;
    bottom: -14px;
    width: 10px;
    height: 6px;
    border-radius: 3px;
    background-color: #8d8780;
}
.tray {
    display: flex;
    align-items: center;
    margin-left: auto;
    padding-right: 42px;
}
.tray-cloud {
    margin-left: 37px;
}
.tray-wifi {
    margin-left: 33px;
}
.tray-sound {
    margin-left: 13px;
}
.tray-battery {
    margin-left: 21px;
}
.clock {
    margin: -2px 0 0 34px;
    font-size: 23px;
    line-height: 32px;
    text-align: right;
}
.tray-bell {
    margin-left: 17px;
}
```
